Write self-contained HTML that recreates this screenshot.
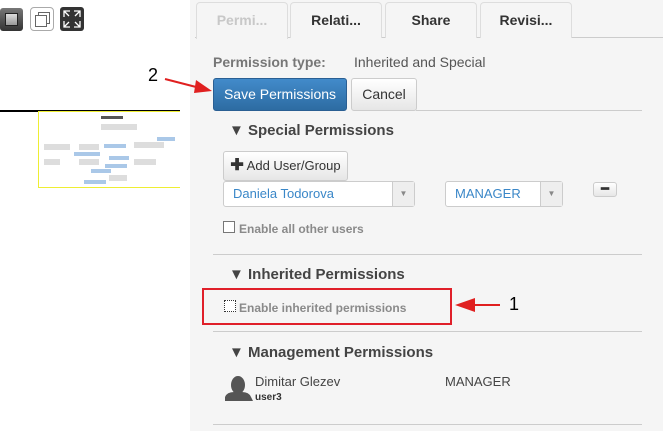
<!DOCTYPE html>
<html><head><style>
*{box-sizing:border-box;margin:0;padding:0}
body{width:663px;height:431px;position:relative;background:#fff;font-family:"Liberation Sans",Arial,sans-serif;overflow:hidden}
.a{position:absolute}
.panel{left:190px;top:0;width:473px;height:431px;background:#f5f5f5}
.tab{top:2px;height:36px;border:1px solid #ddd;border-bottom:none;border-radius:4px 4px 0 0;background:#f5f5f5;font-weight:bold;font-size:14px;color:#333;text-align:center;line-height:34px}
.h{font-weight:bold;font-size:15px;color:#444}
.line{height:1px;background:#ccc}
.btn{border:1px solid #ccc;border-radius:3px;background:linear-gradient(#fff,#e6e6e6);font-size:13px;color:#333;text-align:center}
.sel{border:1px solid #ccc;border-radius:3px;background:#fff;font-size:13px;color:#3a87c8;padding-left:9px;line-height:24px}
.sel i{position:absolute;right:0;top:0;width:22px;height:100%;border-left:1px solid #ccc;background:#eee;font-style:normal;color:#888;font-size:8px;text-align:center;line-height:24px}
.cb{width:12px;height:12px;border:1px solid #777;background:#fff}
.lbl{font-size:12px;font-weight:bold;color:#8a8a8a}
</style></head><body>
<div class="a" style="left:0px;top:8px;width:23px;height:23px;background:linear-gradient(#777,#333);border-radius:3px"><div class="a" style="left:5px;top:5px;width:13px;height:13px;background:linear-gradient(#ddd,#999);border:1px solid #222"></div></div>
<div class="a" style="left:30px;top:7px;width:24px;height:24px;border:1px solid #aaa;border-radius:4px;background:#fff"><div class="a" style="left:7px;top:4px;width:12px;height:12px;border:1px solid #666"></div><div class="a" style="left:4px;top:7px;width:12px;height:12px;border:1px solid #666;background:#fff"></div></div>
<div class="a" style="left:60px;top:7px;width:24px;height:24px;background:#333;border-radius:3px"><svg width="24" height="24" stroke="#fff" stroke-width="1.3" fill="none"><path d="M4 10V4H10M4 4L9 9M14 4H20V10M20 4L15 9M4 14V20H10M4 20L9 15M20 14V20H14M20 20L15 15"/></svg></div>
<div class="a" style="left:148px;top:65px;font-size:18px;color:#000">2</div>
<div class="a" style="left:0;top:110px;width:180px;height:2px;background:#000"></div>
<div class="a" style="left:38px;top:111px;width:142px;height:77px;border:1px solid #ee3;border-right:none;background:#fff">
<div class="a" style="left:62px;top:4px;width:22px;height:3px;background:#555"></div>
<div class="a" style="left:62px;top:12px;width:36px;height:6px;background:#ddd"></div>
<div class="a" style="left:5px;top:32px;width:26px;height:6px;background:#ddd"></div>
<div class="a" style="left:40px;top:32px;width:20px;height:6px;background:#ddd"></div>
<div class="a" style="left:65px;top:32px;width:22px;height:4px;background:#aac8e8"></div>
<div class="a" style="left:95px;top:30px;width:30px;height:6px;background:#ddd"></div>
<div class="a" style="left:118px;top:25px;width:18px;height:4px;background:#aac8e8"></div>
<div class="a" style="left:35px;top:40px;width:26px;height:4px;background:#aac8e8"></div>
<div class="a" style="left:5px;top:47px;width:16px;height:6px;background:#ddd"></div>
<div class="a" style="left:40px;top:47px;width:20px;height:6px;background:#ddd"></div>
<div class="a" style="left:95px;top:47px;width:22px;height:6px;background:#ddd"></div>
<div class="a" style="left:70px;top:44px;width:20px;height:4px;background:#aac8e8"></div>
<div class="a" style="left:66px;top:52px;width:22px;height:4px;background:#aac8e8"></div>
<div class="a" style="left:52px;top:57px;width:20px;height:4px;background:#aac8e8"></div>
<div class="a" style="left:70px;top:63px;width:18px;height:6px;background:#ddd"></div>
<div class="a" style="left:45px;top:68px;width:22px;height:4px;background:#aac8e8"></div>
</div>
<div class="a panel"></div>
<div class="a line" style="left:195px;top:37px;width:468px"></div>
<div class="a tab" style="left:196px;width:92px;color:#c8c8c8;height:37px">Permi...</div>
<div class="a tab" style="left:290px;width:92px">Relati...</div>
<div class="a tab" style="left:385px;width:92px">Share</div>
<div class="a tab" style="left:480px;width:92px">Revisi...</div>
<div class="a" style="left:213px;top:54px;font-size:14px;font-weight:bold;color:#777">Permission type:</div>
<div class="a" style="left:354px;top:54px;font-size:14px;color:#555">Inherited and Special</div>
<div class="a line" style="left:416px;top:110px;width:226px"></div>
<div class="a" style="left:213px;top:78px;width:134px;height:33px;border:1px solid #2a5f93;border-radius:3px;background:linear-gradient(#428bca,#2d6ca2);color:#fff;font-size:14px;text-align:center;line-height:31px">Save Permissions</div>
<div class="a btn" style="left:351px;top:78px;width:66px;height:33px;font-size:14px;line-height:31px">Cancel</div>
<div class="a h" style="left:229px;top:122px">▼ Special Permissions</div>
<div class="a btn" style="left:223px;top:151px;width:125px;height:30px;line-height:28px"><b style="font-size:16px">✚</b> Add User/Group</div>
<div class="a sel" style="left:223px;top:181px;width:192px;height:26px">Daniela Todorova<i>▼</i></div>
<div class="a sel" style="left:445px;top:181px;width:118px;height:26px">MANAGER<i>▼</i></div>
<div class="a btn" style="left:593px;top:182px;width:24px;height:15px;font-weight:bold;line-height:12px">━</div>
<div class="a cb" style="left:223px;top:221px"></div>
<div class="a lbl" style="left:239px;top:222px">Enable all other users</div>
<div class="a line" style="left:213px;top:254px;width:429px"></div>
<div class="a h" style="left:229px;top:266px">▼ Inherited Permissions</div>
<div class="a" style="left:202px;top:288px;width:250px;height:37px;border:2px solid #e0202a"></div>
<div class="a cb" style="left:224px;top:300px;border:1px dotted #333"></div>
<div class="a lbl" style="left:239px;top:301px">Enable inherited permissions</div>
<svg class="a" style="left:0;top:0" width="663" height="431">
<line x1="165" y1="79" x2="200" y2="88" stroke="#e02020" stroke-width="2"/><polygon points="212,91 196,80 194,93" fill="#e02020"/>
<line x1="470" y1="305" x2="500" y2="305" stroke="#e02020" stroke-width="2"/><polygon points="455,305 475,298 475,312" fill="#e02020"/></svg>
<div class="a" style="left:509px;top:294px;font-size:18px;color:#000">1</div>
<div class="a line" style="left:213px;top:331px;width:429px"></div>
<div class="a h" style="left:229px;top:344px">▼ Management Permissions</div>
<svg class="a" style="left:225px;top:375px" width="28" height="26"><ellipse cx="13" cy="10" rx="7" ry="9" fill="#555"/><path d="M0 26 L0 22 Q2 17 9 17 L17 17 Q24 17 26 22 L28 26Z" fill="#555"/></svg>
<div class="a" style="left:255px;top:374px;font-size:13px;color:#444">Dimitar Glezev</div>
<div class="a" style="left:255px;top:392px;font-size:10px;font-weight:bold;color:#333">user3</div>
<div class="a" style="left:445px;top:374px;font-size:13px;color:#444">MANAGER</div>
<div class="a line" style="left:213px;top:424px;width:429px"></div>
</body></html>
